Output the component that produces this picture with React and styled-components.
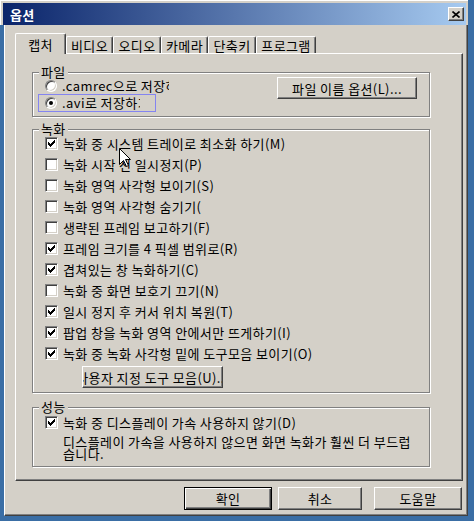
import React from "react";
import styled, { createGlobalStyle } from "styled-components";

const GlobalStyle = createGlobalStyle`
  html, body {
    margin: 0;
    padding: 0;
  }
  body {
    background: #3a6ea5;
    font-family: "Noto Sans CJK KR", "Noto Sans", sans-serif;
    font-size: 13px;
    letter-spacing: 0.4px;
    color: #000;
  }
`;

const Desktop = styled.div`
  position: relative;
  width: 474px;
  height: 521px;
  overflow: hidden;
  background: #3a6ea5;
  display: flex;
  flex-direction: column;
  align-items: flex-start;
`;

const TitleFrame = styled.div`
  width: 468px;
  box-sizing: border-box;
  padding: 3px 2px 0 3px;
  background: #d4d0c8;
  box-shadow: inset 1px 1px 0 #fff;
`;

const TitleBar = styled.div`
  height: 22px;
  display: flex;
  align-items: center;
  justify-content: space-between;
  padding: 0 2px 0 7px;
  background: linear-gradient(to right, #0a246a, #a6caf0);
  color: #fff;
  font-weight: bold;
  line-height: 13px;
`;

const CloseButton = styled.div`
  width: 16px;
  height: 14px;
  box-sizing: border-box;
  background: #d4d0c8;
  border: 1px solid;
  border-color: #fff #404040 #404040 #fff;
  box-shadow: inset -1px -1px 0 #808080;
  display: flex;
  align-items: center;
  justify-content: center;
`;

const Body = styled.div`
  margin-left: 4px;
  width: 464px;
  height: 491px;
  box-sizing: border-box;
  background: #d4d0c8;
  border-left: 1px solid #fff;
  border-right: 1px solid #404040;
  border-bottom: 1px solid #404040;
  box-shadow: inset -1px -1px 0 #808080;
  padding: 8px 0 0 10px;
`;

const TabRow = styled.div`
  display: flex;
  align-items: flex-end;
  height: 21px;
  margin-bottom: -1px;
  position: relative;
  z-index: 1;
`;

const Tab = styled.div`
  width: ${(p) => p.$w}px;
  height: ${(p) => (p.$active ? 21 : 17)}px;
  margin-bottom: ${(p) => (p.$active ? 0 : 1)}px;
  box-sizing: border-box;
  background: #d4d0c8;
  border-left: 1px solid #fff;
  border-top: 1px solid #fff;
  border-right: 1px solid #404040;
  border-radius: 2px 2px 0 0;
  box-shadow: inset -1px 0 0 #808080;
  display: flex;
  align-items: center;
  justify-content: center;
  line-height: 13px;
  white-space: nowrap;
`;

const Panel = styled.div`
  width: 448px;
  height: 428px;
  box-sizing: border-box;
  background: #d4d0c8;
  border: 1px solid;
  border-color: #fff #404040 #404040 #fff;
  box-shadow: inset -1px -1px 0 #808080;
  padding: 18px 0 0 16px;
  display: flex;
  flex-direction: column;
`;

const Group = styled.div`
  width: 398px;
  box-sizing: border-box;
  margin-top: ${(p) => p.$top || 0}px;
  border: 1px solid #808080;
  box-shadow: inset 1px 1px 0 #fff, 1px 1px 0 #fff;
  padding: 0 0 ${(p) => p.$bottom || 4}px 0;
`;

const Legend = styled.div`
  display: table;
  margin: -7px 0 0 6px;
  padding: 0 2px;
  background: #d4d0c8;
  line-height: 12px;
  height: 12px;
`;

const FileContent = styled.div`
  display: flex;
  justify-content: space-between;
  padding-left: 5px;
`;

const RadioList = styled.div`
  display: flex;
  flex-direction: column;
`;

const RadioRow = styled.div`
  height: ${(p) => (p.$focus ? 18 : 16)}px;
  width: ${(p) => (p.$focus ? "118px" : "auto")};
  box-sizing: border-box;
  border: ${(p) => (p.$focus ? "1px solid #8484f0" : "none")};
  padding-left: ${(p) => (p.$focus ? 6 : 7)}px;
  display: flex;
  align-items: center;
  gap: 5px;
`;

const Radio = styled.span`
  flex: none;
  width: 12px;
  height: 12px;
  box-sizing: border-box;
  border-radius: 50%;
  border: 1px solid;
  border-color: #808080 #fff #fff #808080;
  background: #fff;
  box-shadow: inset 1px 1px 0 #404040, inset -1px -1px 0 #d4d0c8;
  display: flex;
  align-items: center;
  justify-content: center;

  &::after {
    content: "";
    width: 4px;
    height: 4px;
    border-radius: 50%;
    background: ${(p) => (p.$on ? "#000" : "transparent")};
  }
`;

const ClipLabel = styled.span`
  display: block;
  width: ${(p) => p.$w}px;
  overflow: hidden;
  white-space: nowrap;
  line-height: 14px;
`;

const Button = styled.div`
  width: ${(p) => p.$w}px;
  height: ${(p) => p.$h || 23}px;
  flex: none;
  box-sizing: border-box;
  background: #d4d0c8;
  border: 1px solid;
  border-color: ${(p) => (p.$default ? "#000" : "#fff #404040 #404040 #fff")};
  box-shadow: ${(p) =>
    p.$default
      ? "inset 1px 1px 0 #fff, inset -1px -1px 0 #404040, inset -2px -2px 0 #808080"
      : "inset -1px -1px 0 #808080"};
  display: flex;
  align-items: center;
  justify-content: center;
  overflow: hidden;
  white-space: nowrap;
  line-height: 13px;
  margin: ${(p) => p.$margin || "0"};
`;

const CheckList = styled.div`
  display: flex;
  flex-direction: column;
  padding-left: 12px;
  margin-top: ${(p) => p.$top || 0}px;
`;

const CheckRow = styled.div`
  height: 21px;
  display: flex;
  align-items: center;
  gap: 5px;
  white-space: nowrap;
  line-height: 14px;
`;

const Box = styled.span`
  flex: none;
  width: 13px;
  height: 13px;
  box-sizing: border-box;
  border: 1px solid;
  border-color: #808080 #fff #fff #808080;
  background: #fff;
  box-shadow: inset 1px 1px 0 #404040, inset -1px -1px 0 #d4d0c8;
  display: flex;
  align-items: center;
  justify-content: center;
`;

const Desc = styled.div`
  margin: 3px 0 0 18px;
  line-height: 12px;
  white-space: nowrap;
`;

const ButtonRow = styled.div`
  width: 448px;
  margin-top: 6px;
  padding-right: 1px;
  box-sizing: border-box;
  display: flex;
  justify-content: flex-end;
`;

const Cursor = styled.svg`
  position: absolute;
  left: 119px;
  top: 148px;
`;

const tabs = [
  { label: "캡처", w: 51, active: true },
  { label: "비디오", w: 47 },
  { label: "오디오", w: 48 },
  { label: "카메라", w: 47 },
  { label: "단축키", w: 48 },
  { label: "프로그램", w: 60 },
];

const checks = [
  { label: "녹화 중 시스템 트레이로 최소화 하기(M)", on: true },
  { label: "녹화 시작 전 일시정지(P)" },
  { label: "녹화 영역 사각형 보이기(S)" },
  { label: "녹화 영역 사각형 숨기기(" },
  { label: "생략된 프레임 보고하기(F)" },
  { label: "프레임 크기를 4 픽셀 범위로(R)", on: true },
  { label: "겹쳐있는 창 녹화하기(C)", on: true },
  { label: "녹화 중 화면 보호기 끄기(N)" },
  { label: "일시 정지 후 커서 위치 복원(T)", on: true },
  { label: "팝업 창을 녹화 영역 안에서만 뜨게하기(I)", on: true },
  { label: "녹화 중 녹화 사각형 밑에 도구모음 보이기(O)", on: true },
];

const Check = ({ on }) => (
  <Box>
    {on && (
      <svg width="7" height="7" viewBox="0 0 7 7" shapeRendering="crispEdges">
        <path d="M0 2 L2 4 L7 -1 L7 2 L2 7 L0 5 Z" fill="#000" />
      </svg>
    )}
  </Box>
);

export default function App() {
  return (
    <Desktop>
      <GlobalStyle />
      <TitleFrame>
        <TitleBar>
          <span>옵션</span>
          <CloseButton>
            <svg width="8" height="7" viewBox="0 0 8 7">
              <path d="M0.5 0.5 L7.5 6.5 M7.5 0.5 L0.5 6.5" stroke="#000" strokeWidth="1.6" />
            </svg>
          </CloseButton>
        </TitleBar>
      </TitleFrame>
      <Body>
        <TabRow>
          {tabs.map((t) => (
            <Tab key={t.label} $w={t.w} $active={t.active}>
              {t.label}
            </Tab>
          ))}
        </TabRow>
        <Panel>
          <Group>
            <Legend>파일</Legend>
            <FileContent>
              <RadioList>
                <RadioRow>
                  <Radio />
                  <ClipLabel $w={107}>.camrec으로 저장하기</ClipLabel>
                </RadioRow>
                <RadioRow $focus>
                  <Radio $on />
                  <ClipLabel $w={78}>.avi로 저장하기</ClipLabel>
                </RadioRow>
              </RadioList>
              <Button $w={140} $h={22} $margin="-1px 12px 0 0">
                파일 이름 옵션(L)...
              </Button>
            </FileContent>
          </Group>

          <Group $top={12}>
            <Legend>녹화</Legend>
            <CheckList $top={-2}>
              {checks.map((c) => (
                <CheckRow key={c.label}>
                  <Check on={c.on} />
                  <span>{c.label}</span>
                </CheckRow>
              ))}
              <Button $w={141} $h={22} $margin="2px 0 0 37px">
                사용자 지정 도구 모음(U)...
              </Button>
            </CheckList>
          </Group>

          <Group $top={14} $bottom={6}>
            <Legend>성능</Legend>
            <CheckList $top={-1}>
              <CheckRow>
                <Check on />
                <span>녹화 중 디스플레이 가속 사용하지 않기(D)</span>
              </CheckRow>
              <Desc>
                디스플레이 가속을 사용하지 않으면 화면 녹화가 훨씬 더 부드럽
                <br />
                습니다.
              </Desc>
            </CheckList>
          </Group>
        </Panel>
        <ButtonRow>
          <Button $w={88} $default>확인</Button>
          <Button $w={84} $margin="0 0 0 6px">취소</Button>
          <Button $w={88} $margin="0 0 0 12px">도움말</Button>
        </ButtonRow>
      </Body>
      <Cursor width="13" height="20" viewBox="0 0 13 20">
        <path
          d="M0.5 0.5 L0.5 16.5 L4.5 12.5 L7.5 18.5 L9.5 17.5 L6.5 11.5 L11.5 11.5 Z"
          fill="#fff"
          stroke="#000"
          strokeWidth="1"
        />
      </Cursor>
    </Desktop>
  );
}
